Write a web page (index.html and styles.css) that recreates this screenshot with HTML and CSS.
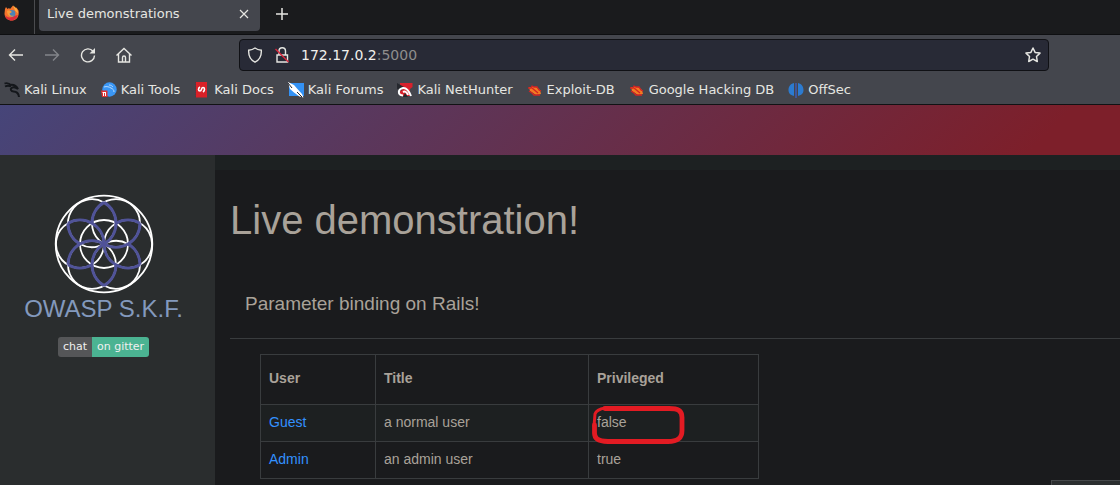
FILE: index.html
```html
<!DOCTYPE html>
<html lang="en">
<head>
<meta charset="utf-8">
<title>Live demonstrations</title>
<link rel="stylesheet" href="styles.css">
</head>
<body>
<header class="browser">
  <div class="tabbar">
    <div class="pinned">
      <svg class="icon" viewBox="0 0 16 16" aria-hidden="true">
        <path d="M1 4l1-2 1.500 2L5 3l1 1 3-3.500 2 3 1.500-1 2 3c1 5-1 9.500-6.500 10C4 15.500.500 13 .500 8.500z" fill="#f4742c"/>
        <path d="M1 10c2 3 6 3 9 1l4-1c-1 3-3 5.500-6.500 5.500C4 15.500 1.500 13 1 10z" fill="#dc2c3c"/>
        <path d="M9 .500c3 2 5 4 5 8l-3-3z" fill="#ffab3d"/>
        <circle cx="8" cy="8.500" r="3.400" fill="#4d83b5"/>
        <path d="M3 6c2-1 4 0 5 1L5.500 8.500C6 11 8 11 10 10.500c-3 3-7 0-7-4.500z" fill="#f99b37"/>
      </svg>
    </div>
    <div class="tab">
      <span>Live demonstrations</span>
      <button class="plain" aria-label="Close tab"><svg class="glyph-small" viewBox="0 0 10 10"><path d="M1 1l8 8M9 1L1 9"/></svg></button>
    </div>
    <button class="plain new-tab" aria-label="New tab"><svg class="glyph-small plus" viewBox="0 0 12 12"><path d="M6 0v12M0 6h12"/></svg></button>
  </div>
  <div class="toolbar">
    <div class="nav">
      <button class="plain" aria-label="Back"><svg class="icon line" viewBox="0 0 16 16"><path d="M15 8H1.500M7 2.500L1.500 8 7 13.500"/></svg></button>
      <button class="plain" aria-label="Forward" disabled><svg class="icon line" viewBox="0 0 16 16"><path d="M1 8h13.500M9 2.500L14.500 8 9 13.500"/></svg></button>
      <button class="plain" aria-label="Reload"><svg class="icon line" viewBox="0 0 16 16"><path d="M13 4.200A6.500 6.500 0 1 0 14.500 8.500"/><path d="M15 1v5.500H9.500z" fill="currentColor" stroke="none"/></svg></button>
      <button class="plain" aria-label="Home"><svg class="icon line" viewBox="0 0 16 16"><path d="M.500 8.500L8 1.500l7.500 7M2.500 7v8h11V7M6.500 15v-4.500q0-1.500 1.500-1.500t1.500 1.500V15"/></svg></button>
    </div>
    <div class="urlbar">
      <svg class="icon line" viewBox="0 0 16 16" aria-hidden="true"><path d="M8 1c2 1.500 4 2 6.300 2.200.4 5.800-2 9.800-6.300 12C3.700 13 1.300 9 1.700 3.200 4 3 6 2.500 8 1z"/></svg>
      <svg class="icon line" viewBox="0 0 16 16" aria-hidden="true"><path d="M3 8h10.500v7H3zM5 8V4a3.200 3.200 0 0 1 6.500 0v4"/><path d="M1.500 2l13 13" stroke="#d8263c"/></svg>
      <div class="address"><span class="host">172.17.0.2</span>:5000</div>
      <button class="plain" aria-label="Bookmark this page"><svg class="icon line" viewBox="0 0 16 16"><path d="M8 1l2.100 4.400 4.900.7-3.500 3.400.8 5L8 12.200l-4.300 2.300.8-5L1 6.100l4.900-.7z" stroke-width="1.500" stroke-linejoin="round"/></svg></button>
    </div>
  </div>
  <nav class="bookmarks" aria-label="Bookmarks">
    <a href="#"><svg class="icon" viewBox="0 0 16 16"><g fill="none" stroke="#14171b"><path d="M.500 1.500C4 0 6 2 7.500 3.500M1 4.500c3-1.500 5-.500 6 0" stroke-width="1.800"/><path d="M6 3c3-.500 6 0 8 4-2-1.500-5-2-6.500-1S7 9.500 9.500 9.500s5 1.500 5.500 5.500" stroke-width="2"/></g></svg>Kali Linux</a>
    <a href="#"><svg class="icon" viewBox="0 0 16 16"><circle cx="8.500" cy="7.500" r="7.200" fill="#3a96f4"/><path d="M3 5c3-1 5 0 7 1s3 2 3 4M8 3c2 0 3 1 4 2" fill="none" stroke="#b9dcff"/><path d="M0 8.500h6.500V15H1z" fill="#df3030"/><path d="M1.500 10.500H5M2.500 11v3M4.500 11v3" stroke="#fff" fill="none"/></svg>Kali Tools</a>
    <a href="#"><svg class="icon" viewBox="0 0 16 16"><path d="M2 0h11v15.500H2z" fill="#d92128"/><path d="M1.500 0v16" stroke="#692a3a" stroke-dasharray="1 1"/><path d="M6 5c-2 1-2 4 0 4s1-3.500 3-3.500 2 3 0 4.500" fill="none" stroke="#fff" stroke-width="1.600"/></svg>Kali Docs</a>
    <a href="#"><svg class="icon" viewBox="0 0 16 16"><path d="M1 1h15v13H1z" fill="#3392f5"/><path d="M0 0l6 3 3 3.500L14 12l1.500 3.500-4-1L6 10.500 2 7z" fill="#fff"/><path d="M0 1l4 5M9 10l5 5" stroke="#25282e" fill="none"/></svg>Kali Forums</a>
    <a href="#"><svg class="icon" viewBox="0 0 16 16"><path d="M3 1h12.500v4L13 7v7H3z" fill="#d8212c"/><path d="M0 1l7 4-3 4-4-2zM8 11l3 4H6z" fill="#25282e"/><path d="M6 13.500C0 13 1 7 6 6c4-.500 6 3 8 8M6 10c2-1 4 0 5 3" fill="none" stroke="#fff" stroke-width="2"/></svg>Kali NetHunter</a>
    <a href="#"><svg class="icon" viewBox="0 0 16 16"><path d="M2 5l7 0 4 3 1 4-5 1-6-4z" fill="#f47a22"/><path d="M1 6l3 0 1-2 2 1 3 0 2 3 2 1M2 9l3 2 2 2 3 0 3 0M5 6l6 5" fill="none" stroke="#d52323" stroke-width="1.300"/></svg>Exploit-DB</a>
    <a href="#"><svg class="icon" viewBox="0 0 16 16"><path d="M2 5l7 0 4 3 1 4-5 1-6-4z" fill="#f47a22"/><path d="M1 6l3 0 1-2 2 1 3 0 2 3 2 1M2 9l3 2 2 2 3 0 3 0M5 6l6 5" fill="none" stroke="#d52323" stroke-width="1.300"/></svg>Google Hacking DB</a>
    <a href="#"><svg class="icon" viewBox="0 0 16 16"><path d="M6 1v13C2 13 .500 11 .500 8S2 2 6 1zM10 1v13c4-1 5.500-3 5.500-6S14 2 10 1z" fill="#2c7bd0"/><path d="M8 1v15" stroke="#3d5bb5" stroke-width="1.500"/></svg>OffSec</a>
  </nav>
</header>
<div class="banner"></div>
<div class="page">
  <aside class="sidebar">
    <svg class="logo" viewBox="-50 -50 100 100" role="img" aria-label="OWASP S.K.F. logo">
      <defs>
        <path id="petal" d="M36-20.800A24 24 0 0 1 0 0M0-41.600A24 24 0 0 0-12-20.800"/>
        <circle id="ring" cx="12" cy="-20.800" r="24"/>
      </defs>
      <g class="logo-rings">
        <circle r="48.300"/><circle r="24"/>
        <use href="#ring"/><use href="#ring" transform="rotate(60)"/><use href="#ring" transform="rotate(120)"/>
        <use href="#ring" transform="rotate(180)"/><use href="#ring" transform="rotate(240)"/><use href="#ring" transform="rotate(300)"/>
      </g>
      <g class="logo-petals">
        <use href="#petal"/><use href="#petal" transform="rotate(60)"/><use href="#petal" transform="rotate(120)"/>
        <use href="#petal" transform="rotate(180)"/><use href="#petal" transform="rotate(240)"/><use href="#petal" transform="rotate(300)"/>
      </g>
    </svg>
    <div class="brand">OWASP S.K.F.</div>
    <a class="badge" href="#"><span class="badge-left">chat</span><span class="badge-right">on gitter</span></a>
  </aside>
  <main class="content">
    <div class="strip"></div>
    <div class="inner">
      <h1>Live demonstration!</h1>
      <p class="lead">Parameter binding on Rails!</p>
      <table class="users">
        <thead><tr><th class="col-user">User</th><th class="col-title">Title</th><th>Privileged</th></tr></thead>
        <tbody>
          <tr class="odd"><td><a href="#">Guest</a></td><td>a normal user</td><td class="marked">false
            <svg class="mark" viewBox="0 0 96 40" aria-hidden="true"><g fill="none" stroke="#e31b23" stroke-linecap="round" stroke-linejoin="round"><path d="M14 3C8 4 5 6 4 9l-1 12" stroke-width="3"/><path d="M14 3.500h64c9 0 13 2 13 9v13c0 8-5 11-14 11H17C6 36 3.500 33 3.500 28v-8" stroke-width="4.800"/></g></svg></td></tr>
          <tr><td><a href="#">Admin</a></td><td>an admin user</td><td>true</td></tr>
        </tbody>
      </table>
    </div>
  </main>
</div>
<div class="status"></div>
</body>
</html>
```
FILE: styles.css
```css
* { box-sizing: border-box; }
body {
  margin: 0;
  min-height: 100vh;
  display: flex;
  flex-direction: column;
  overflow: hidden;
  background: #1a1b1d;
  color: #a9a299;
  font: 14px/20px "Liberation Sans", Arial, sans-serif;
}
a { color: #3391ff; text-decoration: none; }
.icon { display: block; flex: none; width: 16px; height: 16px; }
.line { fill: none; stroke: currentColor; stroke-width: 1.4; }
.plain {
  display: flex;
  padding: 0;
  border: 0;
  background: none;
  color: inherit;
}
.plain:disabled { color: #83858a; }
.glyph-small { width: 10px; height: 10px; stroke: currentColor; fill: none; stroke-width: 1.2; }
.plus { width: 12px; height: 12px; stroke-width: 1.5; }

.browser {
  color: #e6e6e2;
  background: #44464d;
  border-bottom: 1px solid #111214;
  font: 13px/18px "DejaVu Sans", sans-serif;
}
.tabbar {
  display: flex;
  height: 35px;
  background: #1a1b1d;
  border-bottom: 1px solid #0e0f11;
}
.pinned {
  width: 35px;
  padding: 5px 4px;
  border-right: 1px solid #4a4b4e;
}
.tab {
  display: flex;
  align-items: center;
  justify-content: space-between;
  width: 221px;
  height: 31px;
  margin-left: 4px;
  padding: 0 11px 4px 8px;
  border-radius: 0 0 4px 4px;
  background: #44464d;
}
.new-tab { margin-left: 16px; padding-top: 8px; align-self: flex-start; }
.toolbar {
  display: flex;
  height: 40px;
  align-items: center;
}
.nav { display: flex; gap: 20px; width: 239px; padding-left: 8px; }
.urlbar {
  display: flex;
  flex: 0 1 810px;
  align-items: center;
  gap: 11px;
  height: 32px;
  padding: 0 7px;
  border: 1px solid #101115;
  border-radius: 4px;
  background: #282a36;
}
.address { flex: 1; color: #8f8e8d; font-size: 14px; }
.host { color: #f0f0ec; }
.bookmarks { display: flex; gap: 14px; height: 29px; padding: 5px 4px; white-space: nowrap; }
.bookmarks a { display: flex; align-items: center; gap: 4px; color: inherit; }

.banner { height: 50px; background: linear-gradient(135deg, #464579, #7d1f2a 92%); }
.page { display: flex; flex: 1; }
.sidebar {
  display: flex;
  flex: none;
  flex-direction: column;
  align-items: center;
  width: 215px;
  padding: 39px 8px 0 0;
  background: #2a2d2e;
}
.logo { width: 100px; height: 100px; }
.logo-rings { fill: none; stroke: #fff; stroke-width: 1.8; }
.logo-petals { fill: none; stroke: #505398; stroke-width: 3; }
.brand { color: #8399bd; font-size: 24px; line-height: 30px; }
.badge {
  display: flex;
  margin-top: 13px;
  border-radius: 3px;
  overflow: hidden;
  color: #f0f0f0;
  font: 11px/20px "DejaVu Sans", sans-serif;
}
.badge-left { padding: 0 5px; background: #555658; }
.badge-right { padding: 0 5px; background: #4bb392; }
.content { flex: 1; min-width: 0; }
.strip { height: 15px; background: #1d2122; }
.inner { padding-left: 15px; }
h1 { margin: 0; padding-top: 28px; font-size: 40px; line-height: 44px; font-weight: 400; }
.lead {
  margin: 0;
  padding: 49px 15px 22px;
  border-bottom: 1px solid #393c3e;
  font-size: 19px;
  line-height: 25px;
}
.users {
  width: 499px;
  margin: 15px 0 0 30px;
  border-collapse: collapse;
  table-layout: fixed;
}
.users th, .users td { padding: 7px 8px 9px; border: 1px solid #393c3e; text-align: left; vertical-align: top; }
.users th { padding: 13px 8px 16px; }
.col-user { width: 115px; }
.col-title { width: 213px; }
.odd { background: #1d2021; }
.marked { position: relative; }
.mark { position: absolute; left: 2px; top: 0; width: 96px; height: 40px; }
.status {
  position: fixed;
  right: 0;
  bottom: 0;
  width: 69px;
  height: 5px;
  border: 1px solid #45484a;
  border-width: 1px 0 0 1px;
  background: #2b2e2f;
}
```
